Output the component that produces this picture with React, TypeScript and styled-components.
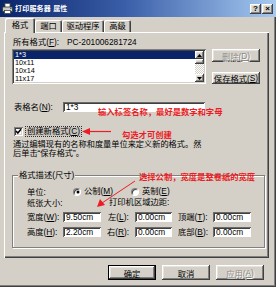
import React from "react";
import styled, { createGlobalStyle, css } from "styled-components";

const Global = createGlobalStyle`
  html, body { margin: 0; padding: 0; background: #d4d0c8; }
  body {
    font-family: "Liberation Sans", "Noto Sans CJK SC", sans-serif;
    font-size: 8.3px;
    color: #000;
  }
  * { box-sizing: border-box; }
  u { text-decoration-thickness: 1px; text-underline-offset: 1px; }
`;

const raised = css`
  box-shadow: inset -1px -1px #404040, inset 1px 1px #ffffff,
    inset -2px -2px #808080, inset 2px 2px #e6e3de;
`;
const sunken = css`
  box-shadow: inset 1px 1px #808080, inset -1px -1px #ffffff,
    inset 2px 2px #404040, inset -2px -2px #d4d0c8;
`;

const Window = styled.div`
  position: relative;
  width: 276px;
  height: 287px;
  background: #d4d0c8;
  display: flex;
  flex-direction: column;
  box-shadow: inset -1px -1px #404040, inset -2px -2px #808080;
  overflow: hidden;
`;

const TitleBar = styled.div`
  height: 17px;
  display: flex;
  align-items: center;
  padding: 0 3px 0 2px;
  background: linear-gradient(90deg, #0a246a 0%, #3a5ea8 45%, #a6caf0 100%);
  color: #fff;
  font-weight: bold;
  font-size: 7px;
`;

const TitleText = styled.span`
  margin-left: 2px;
  line-height: 17px;
  letter-spacing: 0.2px;
`;

const TitleButtons = styled.div`
  margin-left: auto;
  display: flex;
`;

const CaptionButton = styled.div`
  width: 11px;
  height: 10px;
  background: #d4d0c8;
  ${raised};
  color: #000;
  font-family: "Liberation Sans", sans-serif;
  font-size: 8px;
  font-weight: bold;
  line-height: 10px;
  text-align: center;
  & + & { margin-left: 1px; }
`;

const TabStrip = styled.div`
  height: 15px;
  display: flex;
  align-items: flex-end;
  padding-left: 5px;
  position: relative;
  z-index: 2;
`;

const Tab = styled.div<{ $active?: boolean; $w: number }>`
  width: ${(p) => p.$w}px;
  height: ${(p) => (p.$active ? 15 : 12)}px;
  margin-bottom: ${(p) => (p.$active ? -1 : 0)}px;
  background: #d4d0c8;
  border-top-left-radius: 2px;
  border-top-right-radius: 2px;
  box-shadow: inset 1px 1px #ffffff, inset -1px 0 #404040, inset -2px 0 #808080;
  display: flex;
  justify-content: center;
  padding-top: ${(p) => (p.$active ? 3 : 2)}px;
  line-height: 9px;
  font-size: 8.3px;
`;

const Panel = styled.div`
  margin-left: 4px;
  width: 265px;
  height: 226px;
  padding: 6px 0 0 8px;
  display: flex;
  flex-direction: column;
  box-shadow: inset 1px 1px #ffffff, inset -1px -1px #404040, inset -2px -2px #808080;
`;

const InfoLine = styled.div`
  height: 9px;
  line-height: 9px;
  display: flex;
  padding-left: 1px;
`;

const InfoLabel = styled.span`
  width: 54px;
`;

const FormatsRow = styled.div`
  margin-top: 2px;
  display: flex;
  height: 35px;
`;

const ListBox = styled.div`
  width: 194px;
  height: 35px;
  background: #fff;
  ${sunken};
  padding: 2px;
  display: flex;
`;

const ListItems = styled.div`
  flex: 1;
  display: flex;
  flex-direction: column;
`;

const ListItem = styled.div<{ $selected?: boolean }>`
  height: 8px;
  line-height: 8px;
  font-size: 7.3px;
  padding-left: 1px;
  background: ${(p) => (p.$selected ? "#0a246a" : "transparent")};
  color: ${(p) => (p.$selected ? "#fff" : "#000")};
`;

const ScrollBar = styled.div`
  width: 9px;
  display: flex;
  flex-direction: column;
  background-color: #ebe9e4;
  background-image: repeating-conic-gradient(#ffffff 0 25%, #d4d0c8 0 50%);
  background-size: 2px 2px;
`;

const ScrollArrow = styled.div`
  width: 9px;
  height: 8px;
  background: #d4d0c8;
  ${raised};
  display: flex;
  align-items: center;
  justify-content: center;
`;

const ScrollThumb = styled.div`
  width: 9px;
  height: 5px;
  background: #d4d0c8;
  ${raised};
`;

const ScrollTrack = styled.div`
  flex: 1;
`;

const SideButtons = styled.div`
  margin-left: 6px;
  width: 48px;
  display: flex;
  flex-direction: column;
  justify-content: space-between;
`;

const PushButton = styled.div<{ $disabled?: boolean; $default?: boolean; $h?: number }>`
  height: ${(p) => p.$h ?? 13}px;
  display: flex;
  align-items: center;
  justify-content: center;
  background: #d4d0c8;
  ${raised};
  color: ${(p) => (p.$disabled ? "#8c8a85" : "#000")};
  text-shadow: ${(p) => (p.$disabled ? "1px 1px 0 #ffffff" : "none")};
  ${(p) =>
    p.$default &&
    css`
      outline: 1px solid #000;
      outline-offset: -1px;
      box-shadow: inset -2px -2px #404040, inset 2px 2px #ffffff,
        inset -3px -3px #808080, inset 3px 3px #e6e3de;
    `}
`;

const NameRow = styled.div`
  margin-top: 18px;
  height: 10px;
  display: flex;
  align-items: center;
`;

const FieldLabel = styled.span<{ $w: number; $pad?: number }>`
  width: ${(p) => p.$w}px;
  padding-left: ${(p) => p.$pad ?? 0}px;
  line-height: 10px;
  white-space: nowrap;
`;

const TextField = styled.div<{ $w: number }>`
  width: ${(p) => p.$w}px;
  height: 10px;
  background: #fff;
  box-shadow: inset 1px 1px #6a6a6a, inset -1px -1px #ffffff, inset 2px 2px #404040;
  padding-left: 3px;
  line-height: 10px;
  font-size: 8.3px;
`;

const CheckRow = styled.div`
  margin-top: 15px;
  height: 9px;
  display: flex;
  align-items: center;
  padding-left: 2px;
`;

const CheckBox = styled.div`
  width: 9px;
  height: 9px;
  background: #fff;
  ${sunken};
  display: flex;
  align-items: center;
  justify-content: center;
`;

const FocusLabel = styled.span`
  margin-left: 3px;
  padding: 0 1px;
  line-height: 9px;
  background: #c9c5bd;
  outline: 1px dotted #303030;
`;

const Description = styled.div`
  margin-top: 4px;
  line-height: 9px;
  font-size: 8.2px;
  padding-left: 1px;
  white-space: nowrap;
`;

const Group = styled.div`
  margin-top: 17px;
  width: 253px;
  height: 73px;
  border: 1px solid #808080;
  box-shadow: inset 1px 1px #ffffff, 1px 1px #ffffff;
  display: flex;
  flex-direction: column;
`;

const Legend = styled.span`
  align-self: flex-start;
  margin: -5px 0 0 5px;
  padding: 0 1px;
  background: #d4d0c8;
  line-height: 9px;
`;

const GroupRow = styled.div<{ $mt: number }>`
  margin-top: ${(p) => p.$mt}px;
  height: 9px;
  line-height: 9px;
  display: flex;
  align-items: center;
  padding-left: 14px;
`;

const RadioOption = styled.div<{ $w?: number }>`
  width: ${(p) => (p.$w ? `${p.$w}px` : "auto")};
  display: flex;
  align-items: center;
  padding-left: 1px;
`;

const RadioCircle = styled.div<{ $checked?: boolean }>`
  width: 8px;
  height: 8px;
  border-radius: 50%;
  background: #fff;
  border: 1px solid;
  border-color: #808080 #ffffff #ffffff #808080;
  box-shadow: inset 1px 1px #404040;
  display: flex;
  align-items: center;
  justify-content: center;
  &::after {
    content: "";
    width: 2px;
    height: 2px;
    border-radius: 50%;
    background: ${(p) => (p.$checked ? "#000" : "transparent")};
    margin: 0 0 0 1px;
    box-shadow: ${(p) => (p.$checked ? "0 0 0 0.5px #000" : "none")};
  }
`;

const RadioText = styled.span`
  margin-left: 3px;
`;

const DimGrid = styled.div`
  margin-top: 5px;
  padding-left: 14px;
  display: grid;
  grid-template-columns: 36px 38px 34px 37px 41px 38px;
  grid-auto-rows: 10px;
  row-gap: 5px;
  align-items: center;
`;

const ButtonRow = styled.div`
  margin-top: 7px;
  height: 15px;
  display: flex;
  justify-content: flex-end;
  gap: 6px;
  padding-right: 12px;
`;

const DialogButton = styled(PushButton)`
  width: 48px;
  height: 15px;
`;

const Note = styled.div<{ $x: number; $y: number }>`
  position: absolute;
  left: ${(p) => p.$x}px;
  top: ${(p) => p.$y}px;
  color: #ec1c24;
  font-weight: bold;
  line-height: 9px;
  font-size: 8.3px;
  white-space: nowrap;
  z-index: 5;
`;

const ArrowSvg = styled.svg<{ $x: number; $y: number }>`
  position: absolute;
  left: ${(p) => p.$x}px;
  top: ${(p) => p.$y}px;
  z-index: 5;
  overflow: visible;
`;

const PrinterIcon = () => (
  <svg width="11" height="11" viewBox="0 0 11 11">
    <rect x="3" y="0.5" width="5" height="4" fill="#fff" stroke="#555" strokeWidth="0.8" />
    <rect x="0.5" y="4" width="10" height="4.5" fill="#c8c8c8" stroke="#333" strokeWidth="0.8" />
    <rect x="2.5" y="7.5" width="6" height="3" fill="#fff" stroke="#444" strokeWidth="0.8" />
    <rect x="8" y="5" width="1.5" height="1" fill="#2a8a2a" />
  </svg>
);

const Up = () => (
  <svg width="5" height="3" viewBox="0 0 5 3">
    <polygon points="2.5,0 5,3 0,3" fill="#000" />
  </svg>
);
const Down = () => (
  <svg width="5" height="3" viewBox="0 0 5 3">
    <polygon points="0,0 5,0 2.5,3" fill="#000" />
  </svg>
);

const Check = () => (
  <svg width="7" height="7" viewBox="0 0 7 7">
    <polyline points="1,3 2.8,5 6,1.2" fill="none" stroke="#000" strokeWidth="1.5" />
  </svg>
);

export default function App() {
  return (
    <>
      <Global />
      <Window>
        <TitleBar>
          <PrinterIcon />
          <TitleText>打印服务器 属性</TitleText>
          <TitleButtons>
            <CaptionButton>?</CaptionButton>
            <CaptionButton>×</CaptionButton>
          </TitleButtons>
        </TitleBar>

        <TabStrip>
          <Tab $active $w={30}>格式</Tab>
          <Tab $w={27}>端口</Tab>
          <Tab $w={42}>驱动程序</Tab>
          <Tab $w={27}>高级</Tab>
        </TabStrip>

        <Panel>
          <InfoLine>
            <InfoLabel>
              所有格式(<u>F</u>):
            </InfoLabel>
            <span>PC-201006281724</span>
          </InfoLine>

          <FormatsRow>
            <ListBox>
              <ListItems>
                <ListItem $selected>1*3</ListItem>
                <ListItem>10x11</ListItem>
                <ListItem>10x14</ListItem>
                <ListItem>11x17</ListItem>
              </ListItems>
              <ScrollBar>
                <ScrollArrow>
                  <Up />
                </ScrollArrow>
                <ScrollThumb />
                <ScrollTrack />
                <ScrollArrow>
                  <Down />
                </ScrollArrow>
              </ScrollBar>
            </ListBox>
            <SideButtons>
              <PushButton $disabled>
                删除(<u>D</u>)
              </PushButton>
              <PushButton $h={12}>
                保存格式(<u>S</u>)
              </PushButton>
            </SideButtons>
          </FormatsRow>

          <NameRow>
            <FieldLabel $w={51} $pad={2}>
              表格名(<u>N</u>):
            </FieldLabel>
            <TextField $w={142}>1*3</TextField>
          </NameRow>

          <CheckRow>
            <CheckBox>
              <Check />
            </CheckBox>
            <FocusLabel>
              创建新格式(<u>C</u>)
            </FocusLabel>
          </CheckRow>

          <Description>
            通过编辑现有的名称和度量单位来定义新的格式。然
            <br />
            后单击“保存格式”。
          </Description>

          <Group>
            <Legend>格式描述(尺寸)</Legend>
            <GroupRow $mt={7}>
              <FieldLabel $w={45}>单位:</FieldLabel>
              <RadioOption $w={58}>
                <RadioCircle $checked />
                <RadioText>
                  公制(<u>M</u>)
                </RadioText>
              </RadioOption>
              <RadioOption>
                <RadioCircle />
                <RadioText>
                  英制(<u>E</u>)
                </RadioText>
              </RadioOption>
            </GroupRow>
            <GroupRow $mt={2}>
              <FieldLabel $w={82}>纸张大小:</FieldLabel>
              <span>打印机区域边距:</span>
            </GroupRow>
            <DimGrid>
              <FieldLabel $w={36}>
                宽度(<u>W</u>):
              </FieldLabel>
              <TextField $w={38}>9.50cm</TextField>
              <FieldLabel $w={34} $pad={7}>
                左(<u>L</u>):
              </FieldLabel>
              <TextField $w={37}>0.00cm</TextField>
              <FieldLabel $w={41} $pad={6}>
                顶端(<u>T</u>):
              </FieldLabel>
              <TextField $w={38}>0.00cm</TextField>

              <FieldLabel $w={36}>
                高度(<u>H</u>):
              </FieldLabel>
              <TextField $w={38}>2.20cm</TextField>
              <FieldLabel $w={34} $pad={6}>
                右(<u>R</u>):
              </FieldLabel>
              <TextField $w={37}>0.00cm</TextField>
              <FieldLabel $w={41} $pad={6}>
                底部(<u>B</u>):
              </FieldLabel>
              <TextField $w={38}>0.00cm</TextField>
            </DimGrid>
          </Group>
        </Panel>

        <ButtonRow>
          <DialogButton $default>确定</DialogButton>
          <DialogButton>取消</DialogButton>
          <DialogButton $disabled>
            应用(<u>A</u>)
          </DialogButton>
        </ButtonRow>

        <Note $x={98} $y={108}>输入标签名称，最好是数字和字母</Note>
        <ArrowSvg $x={82} $y={127} width="30" height="9" viewBox="0 0 30 9">
          <line x1="29" y1="4.5" x2="6" y2="4.5" stroke="#ec1c24" strokeWidth="1.2" />
          <polygon points="0,4.5 8,1 8,8" fill="#ec1c24" />
        </ArrowSvg>
        <Note $x={122} $y={131}>勾选才可创建</Note>
        <Note $x={139} $y={173}>选择公制，宽度是整卷纸的宽度</Note>
        <ArrowSvg $x={94} $y={178} width="44" height="32" viewBox="0 0 44 32">
          <line x1="41" y1="3" x2="8" y2="25" stroke="#ec1c24" strokeWidth="1" />
          <polygon points="3,29 6,21 11,27" fill="#ec1c24" />
        </ArrowSvg>
      </Window>
    </>
  );
}
